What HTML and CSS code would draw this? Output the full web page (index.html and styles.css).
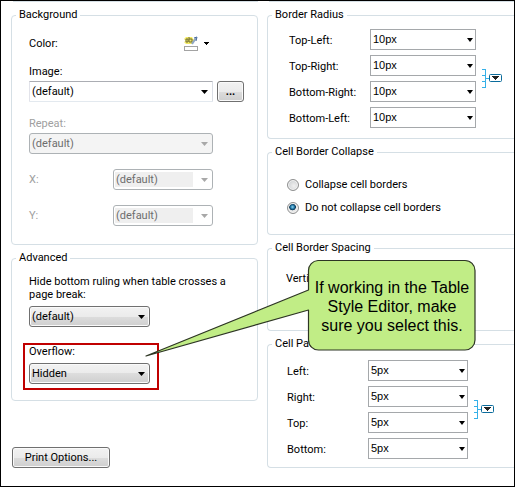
FILE: index.html
```html
<!DOCTYPE html>
<html lang="en">
<head>
<meta charset="utf-8">
<title>Table Style Editor</title>
<link rel="stylesheet" href="styles.css">
</head>
<body>
<main class="dialog">
  <div class="column column-left">
    <div class="group-end"></div>
    <fieldset class="group background">
      <legend>Background</legend>
      <div class="row color-row">
        <span id="color-label">Color:</span>
        <button class="color-button" type="button" aria-labelledby="color-label">
          <svg width="27" height="16" viewBox="0 0 27 16">
            <path d="M2 1h6l2 3-2 4H2L0 6l2-1-2-2z" fill="#f3ea65"/>
            <path d="M2 3h2v3H2zM5 1v5h3V3H5" fill="none" stroke="#6d6a35"/>
            <path d="M8 8l4-6" stroke="#8fa6c4" stroke-width="2"/>
            <path d="M10 2l3-1-1 4" fill="none" stroke="#47699b"/>
            <rect x=".5" y="10.500" width="13" height="4" fill="#fff" stroke="#a3a3a3"/>
            <path d="M20 6h5v1h-1v1h-1v1h-1V8h-1V7h-1z" fill="#000"/>
          </svg>
        </button>
      </div>
      <label for="image">Image:</label>
      <div class="row image-row">
        <span class="combo pale"><select id="image"><option>(default)</option></select></span>
        <button class="push browse" type="button" aria-label="Browse">...</button>
      </div>
      <label class="dim" for="repeat">Repeat:</label>
      <span class="combo off wide"><select id="repeat" disabled><option>(default)</option></select></span>
      <div class="row axis">
        <label class="dim" for="pos-x">X:</label>
        <span class="combo off inset"><select id="pos-x" disabled><option>(default)</option></select></span>
      </div>
      <div class="row axis">
        <label class="dim" for="pos-y">Y:</label>
        <span class="combo off inset"><select id="pos-y" disabled><option>(default)</option></select></span>
      </div>
    </fieldset>

    <fieldset class="group advanced">
      <legend>Advanced</legend>
      <label class="ruling" for="ruling">Hide bottom ruling when table crosses a page break:</label>
      <span class="combo raised"><select id="ruling"><option>(default)</option></select></span>
      <div class="highlight">
        <label for="overflow">Overflow:</label>
        <span class="combo raised"><select id="overflow"><option>Hidden</option></select></span>
      </div>
    </fieldset>

    <button class="push print" type="button">Print Options...</button>
  </div>

  <div class="column column-right">
    <div class="group-end"></div>
    <fieldset class="group sides radius">
      <legend>Border Radius</legend>
      <div class="side-grid">
        <label for="tl">Top-Left:</label>
        <span class="combo flat"><select id="tl"><option>10px</option></select></span>
        <label for="tr">Top-Right:</label>
        <span class="combo flat"><select id="tr"><option>10px</option></select></span>
        <label for="br">Bottom-Right:</label>
        <span class="combo flat"><select id="br"><option>10px</option></select></span>
        <label for="bl">Bottom-Left:</label>
        <span class="combo flat"><select id="bl"><option>10px</option></select></span>
      </div>
      <button class="link-sides" type="button" aria-label="Set all corners">
        <svg width="21" height="19" viewBox="0 0 21 19">
          <path d="M0 .5h4M0 6.500h4M0 12.500h4M0 18.500h4M3.500 0v19M4 9.500h4" fill="none" stroke="#35b0e8"/>
          <rect x="7.500" y="5.500" width="12" height="7" rx="1" fill="#fff" stroke="#0b6c9c"/>
          <path d="M10 7h7v1h-1v1h-1v1h-1v1h-1v-1h-1V9h-1V8h-1z" fill="#222"/>
        </svg>
      </button>
    </fieldset>

    <fieldset class="group collapse">
      <legend>Cell Border Collapse</legend>
      <label class="choice"><input type="radio" name="collapse">Collapse cell borders</label>
      <label class="choice"><input type="radio" name="collapse" checked>Do not collapse cell borders</label>
    </fieldset>

    <fieldset class="group spacing">
      <legend>Cell Border Spacing</legend>
      <span>Verti</span>
    </fieldset>

    <fieldset class="group sides padding">
      <legend>Cell Padding</legend>
      <div class="side-grid">
        <label for="left">Left:</label>
        <span class="combo flat"><select id="left"><option>5px</option></select></span>
        <label for="right">Right:</label>
        <span class="combo flat"><select id="right"><option>5px</option></select></span>
        <label for="top">Top:</label>
        <span class="combo flat"><select id="top"><option>5px</option></select></span>
        <label for="bottom">Bottom:</label>
        <span class="combo flat"><select id="bottom"><option>5px</option></select></span>
      </div>
      <button class="link-sides" type="button" aria-label="Set all sides">
        <svg width="21" height="19" viewBox="0 0 21 19">
          <path d="M0 .5h4M0 6.500h4M0 12.500h4M0 18.500h4M3.500 0v19M4 9.500h4" fill="none" stroke="#35b0e8"/>
          <rect x="7.500" y="5.500" width="12" height="7" rx="1" fill="#fff" stroke="#0b6c9c"/>
          <path d="M10 7h7v1h-1v1h-1v1h-1v1h-1v-1h-1V9h-1V8h-1z" fill="#222"/>
        </svg>
      </button>
    </fieldset>
  </div>

  <aside class="callout">
    <svg class="callout-shape" width="332" height="98" viewBox="0 0 332 98">
      <path d="M173 2.500H320a10 10 0 0 1 10 10V82a10 10 0 0 1-10 10H173.500a10 10 0 0 1-10-10V52L1 98 163.500 32V12.500a10 10 0 0 1 9.500-10z" fill="#c1ed86" stroke="#2d3524" stroke-width="1.200" stroke-linejoin="round"/>
    </svg>
    <p>If working in the Table Style Editor, make sure you select this.</p>
  </aside>
</main>
</body>
</html>
```
FILE: styles.css
```css
* {
  box-sizing: border-box;
}

body {
  margin: 0;
  background: #fff;
  color: #000;
  font: 11px/14px Roboto, "DejaVu Sans", sans-serif;
}

.dialog {
  position: relative;
  display: grid;
  grid-template-columns: 247px 1fr;
  gap: 9px;
  min-height: 100vh;
  padding-left: 10px;
  border: 1px solid #000;
  overflow: hidden;
}

.column {
  display: flex;
  flex-direction: column;
  gap: 6px;
}

/* Lower edge of the groups scrolled out of view */
.group-end {
  height: 1px;
  margin-left: 2px;
  background: #d5dfe5;
}

.group {
  --inset: 17px;
  min-width: 0;
  margin: 0;
  padding-left: var(--inset);
  border: 1px solid #d5dfe5;
  border-radius: 4px;
}

.group legend {
  margin-left: calc(4px - var(--inset));
  padding: 0 3px;
}

.column-right .group {
  border-right: 0;
  border-radius: 4px 0 0 4px;
}

.row {
  display: flex;
  align-items: center;
}

label {
  display: block;
}

.dim {
  color: #a0a0a0;
}

/* Background */
.background {
  padding-block: 12px 18px;
}

.color-row {
  height: 20px;
  margin-bottom: 11px;
}

#color-label {
  width: 155px;
}

.color-button,
.link-sides {
  display: flex;
  padding: 0;
  border: 0;
  background: none;
}

.image-row {
  gap: 4px;
  margin: 2px 0 15px;
}

.image-row .combo,
.wide {
  width: 184px;
}

.wide {
  margin-top: 2px;
}

.axis {
  justify-content: space-between;
  width: 184px;
  margin-top: 15px;
}

.axis .combo {
  width: 100px;
}

/* Drop-downs */
.combo {
  position: relative;
  display: block;
  height: 21px;
}

.combo select {
  display: block;
  width: 100%;
  height: 100%;
  margin: 0;
  padding: 0 20px 0 2px;
  border: 1px solid #a5a8ab;
  border-radius: 0;
  background: #fff;
  color: #000;
  font: 11px/19px Roboto, "DejaVu Sans", sans-serif;
  appearance: none;
}

.combo::after {
  content: "";
  position: absolute;
  top: 9px;
  right: 5px;
  width: 7px;
  height: 4px;
  background: #000;
  clip-path: polygon(0 0, 100% 0, 50% 100%);
  pointer-events: none;
}

.combo.pale select {
  border-color: #abadb3 #dbdfe6 #e3e9ef #e2e3ea;
  border-radius: 1px;
}

.raised {
  width: 121px;
}

.combo.raised select,
.push {
  border: 1px solid #707070;
  border-radius: 3px;
  background: linear-gradient(#f2f2f2 0, #ebebeb 50%, #dddddd 50%, #cfcfcf 100%);
  box-shadow: inset 0 0 0 1px #fafafa;
}

.combo.off select {
  border-color: #adb2b5;
  border-radius: 3px;
  background: #f4f4f4;
  color: #6d6d6d;
  opacity: 1;
}

.combo.off::after {
  background: #a8a8a8;
}

.combo.inset select {
  background: linear-gradient(#efefef, #efefef) 1px 2px / 78px 15px no-repeat #fff;
}

.combo.flat select {
  font-family: "Liberation Sans", Arial, sans-serif;
}

.combo.flat::after {
  right: 3px;
  width: 6px;
}

/* Buttons */
.push {
  height: 21px;
  padding: 0;
  color: #000;
  font: 11px/17px Roboto, "DejaVu Sans", sans-serif;
}

.browse {
  width: 27px;
  font-weight: bold;
}

.print {
  align-self: flex-start;
  width: 98px;
  margin: 40px 0 0 1px;
}

/* Advanced */
.advanced {
  padding-block: 10px;
  padding-right: 30px;
}

.ruling {
  margin-bottom: 5px;
  line-height: 13px;
}

.highlight {
  width: 136px;
  margin: 16px 0 0 -6px;
  padding: 0 4px 4px;
  border: 2px solid #c00000;
}

.highlight .combo {
  margin-top: 4px;
}

/* Four-sided settings: fields beside their linking button */
.sides {
  display: flex;
  align-items: center;
  gap: 6px;
}

.side-grid {
  display: grid;
  grid-template-columns: 81px 106px;
  row-gap: 5px;
}

.side-grid label {
  padding-top: 5px;
}

.radius {
  --inset: 21px;
  padding-block: 7px 10px;
}

.padding {
  --inset: 19px;
  padding-block: 9px 8px;
}

.padding .side-grid {
  grid-template-columns: 81px 100px;
}

/* Cell border collapse */
.collapse {
  --inset: 19px;
  padding-block: 19px;
}

.choice {
  display: flex;
  align-items: center;
  gap: 6px;
}

.choice + .choice {
  margin-top: 9px;
}

.choice input {
  width: 12px;
  height: 12px;
  margin: 0;
  border: 1px solid #8e8f8f;
  border-radius: 50%;
  background: radial-gradient(circle at 60% 60%, #f0f0f0, #c4c8cb);
  box-shadow: inset 0 0 0 1px #f4f4f4;
  appearance: none;
}

.choice input:checked {
  background: radial-gradient(circle at 45% 40%, #8fd8f4 0, #1c6f9e 25%, #0b3552 37%, #e8e8e8 45%);
}

/* Cell border spacing */
.spacing {
  --inset: 18px;
  padding-block: 17px 44px;
}

/* Callout */
.callout {
  position: absolute;
  top: 257px;
  left: 144px;
  width: 332px;
}

.callout-shape {
  position: absolute;
  top: 0;
  left: 0;
  overflow: visible;
}

.callout p {
  position: relative;
  margin: 20px 4px 0 166px;
  font: 16px/19px "Liberation Sans", Arial, sans-serif;
  text-align: center;
}
```
